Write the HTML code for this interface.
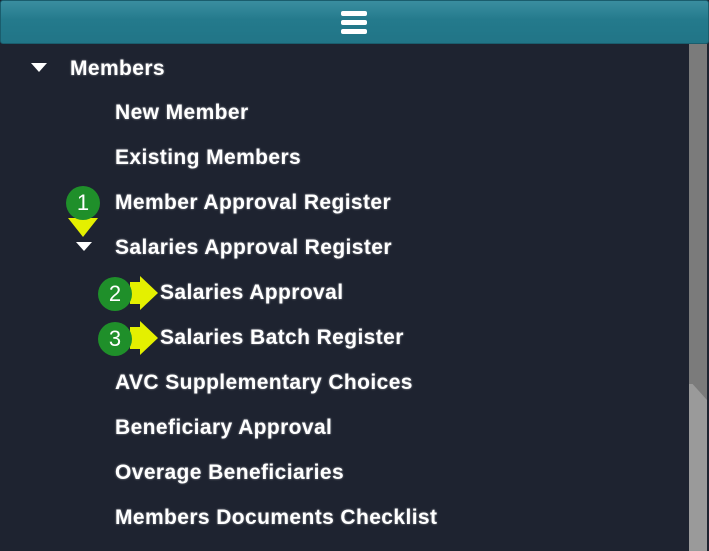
<!DOCTYPE html>
<html style="overflow:hidden;height:551px"><head><style>
body{margin:0;width:709px;height:551px;overflow:hidden;background:#1e2330;position:relative;font-family:"Liberation Sans",sans-serif}
.hdr{position:absolute;left:0;top:0;width:707px;height:42px;background:linear-gradient(#3a8ea0,#247a8c 45%,#217587);border:1px solid #1a5d6d;border-radius:3px}
.hb{position:absolute;top:10px;width:26px}
.hb div{height:5px;background:#fff;border-radius:2px;margin-bottom:4px}
.sb{position:absolute;left:689px;top:44px;width:18px;height:507px;background:#9a9a9a}
.sbt{position:absolute;left:689px;top:44px;width:18px;height:340px;background:#7b7b7b}
.t{position:absolute;color:#fff;font-weight:bold;font-size:21px;letter-spacing:0.4px;line-height:24px;white-space:nowrap;text-shadow:0 0 2px #fff8}
.tri{position:absolute;width:0;height:0;border-left:8px solid transparent;border-right:8px solid transparent;border-top:9px solid #fff}
.bd{position:absolute;width:34px;height:34px;border-radius:50%;background:#1f8f2a;color:#fff;font-size:22px;text-align:center;line-height:34px}
</style></head><body>
<div class="hdr"><div class="hb" style="left:340px"><div></div><div></div><div></div></div></div>
<div class="sb"></div><div class="sbt"></div>
<svg style="position:absolute;left:689px;top:380px" width="18" height="22"><polygon points="0,0 18,0 18,20" fill="#7b7b7b"/></svg>
<div class="tri" style="left:31px;top:63px"></div>
<div class="t" style="left:70px;top:57px">Members</div>
<div class="t" style="left:115px;top:101px">New Member</div>
<div class="t" style="left:115px;top:146px">Existing Members</div>
<div class="t" style="left:115px;top:191px">Member Approval Register</div>
<div class="tri" style="left:76px;top:242px"></div>
<div class="t" style="left:115px;top:236px">Salaries Approval Register</div>
<div class="t" style="left:160px;top:281px">Salaries Approval</div>
<div class="t" style="left:160px;top:326px">Salaries Batch Register</div>
<div class="t" style="left:115px;top:371px">AVC Supplementary Choices</div>
<div class="t" style="left:115px;top:416px">Beneficiary Approval</div>
<div class="t" style="left:115px;top:461px">Overage Beneficiaries</div>
<div class="t" style="left:115px;top:506px">Members Documents Checklist</div>
<svg style="position:absolute;left:0;top:0" width="709" height="551">
<polygon points="68,218 98,218 83,237" fill="#e4f000"/>
<polygon points="130,282 140,282 140,276 158,293 140,310 140,304 130,304" fill="#e4f000"/>
<polygon points="130,327 140,327 140,321 158,338 140,355 140,349 130,349" fill="#e4f000"/>
</svg>
<div class="bd" style="left:66px;top:186px">1</div>
<div class="bd" style="left:98px;top:277px">2</div>
<div class="bd" style="left:98px;top:322px">3</div>
</body></html>
